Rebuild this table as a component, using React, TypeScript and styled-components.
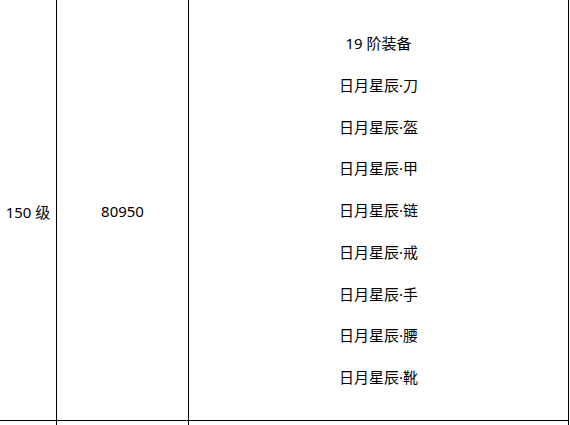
import React from "react";
import styled, { createGlobalStyle } from "styled-components";

const GlobalStyle = createGlobalStyle`
  html, body {
    margin: 0;
    padding: 0;
    background: #fff;
    overflow: hidden;
  }
  body {
    font-family: "Noto Sans", "Noto Sans CJK SC", sans-serif;
    color: #000;
  }
`;

const items = ["刀", "盔", "甲", "链", "戒", "手", "腰", "靴"];

const App: React.FC = () => {
  return (
    <>
      <GlobalStyle />
      <Grid>
        <Cell>150 级</Cell>
        <Cell>80950</Cell>
        <Cell>
          <List>
            <Line>19 阶装备</Line>
            {items.map((it) => (
              <Line key={it}>日月星辰·{it}</Line>
            ))}
          </List>
        </Cell>
        <Cell $short />
        <Cell $short />
        <Cell $short />
      </Grid>
    </>
  );
};

export default App;

const Grid = styled.div`
  display: grid;
  grid-template-columns: 57px 132px 380px;
  grid-template-rows: 421px 4px;
`;

const Cell = styled.div<{ $short?: boolean }>`
  box-sizing: border-box;
  border-right: 1px solid #000;
  border-bottom: ${(p) => (p.$short ? "none" : "1px solid #000")};
  display: flex;
  align-items: center;
  justify-content: center;
  padding-top: 2px;
  font-size: 15px;
  white-space: nowrap;
`;

const List = styled.div`
  display: flex;
  flex-direction: column;
  align-items: center;
`;

const Line = styled.div`
  height: 41.75px;
  line-height: 41.75px;
`;
